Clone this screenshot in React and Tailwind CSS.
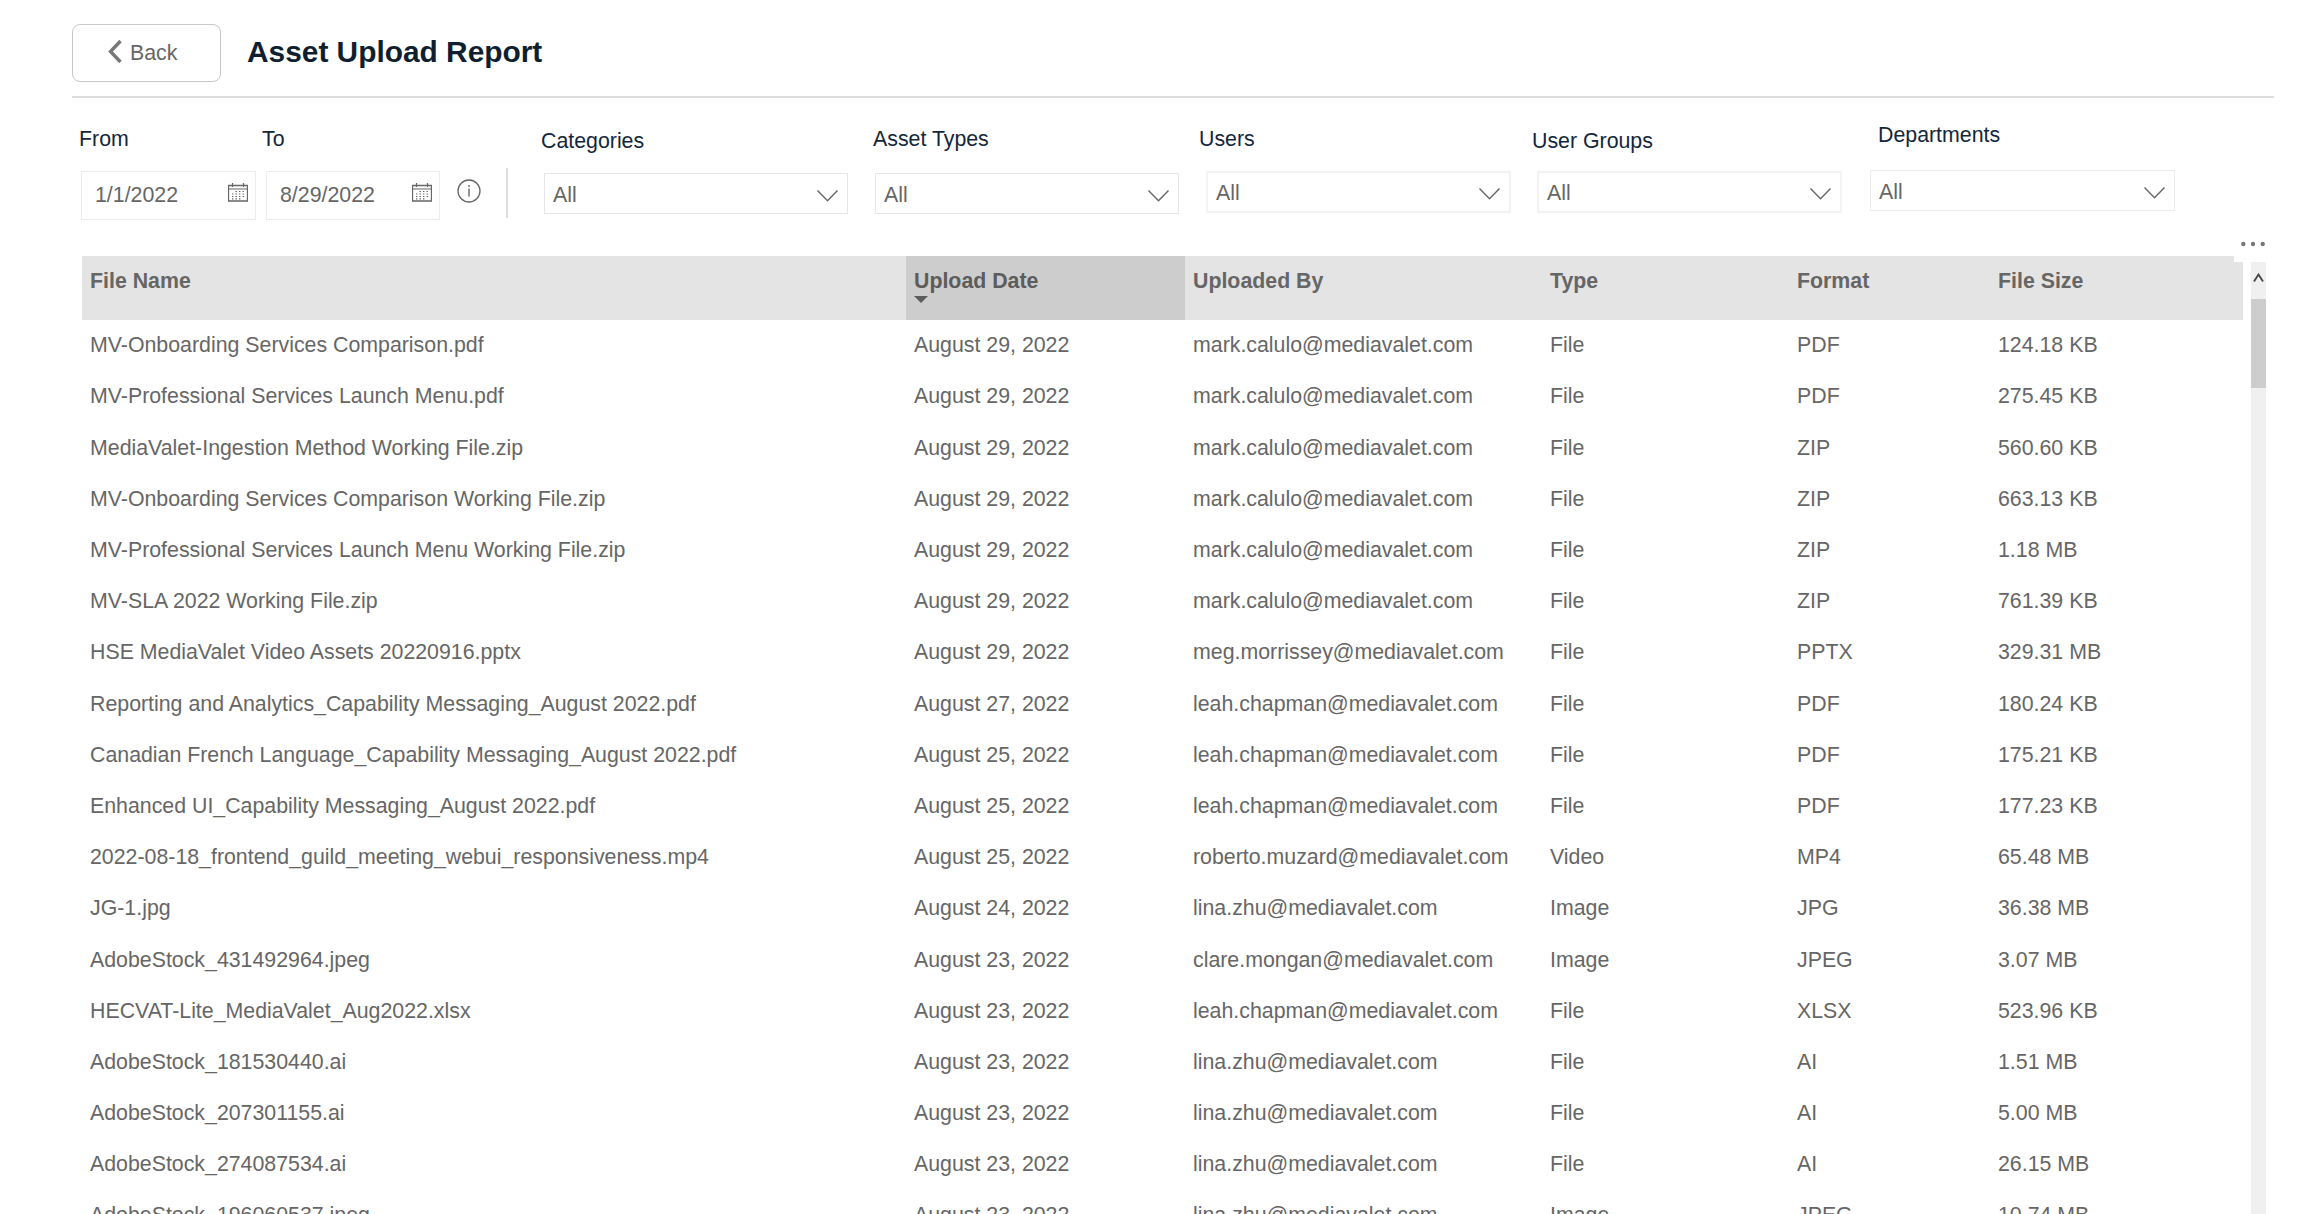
import React from 'react';

const columns = [
  { key: 'name', label: 'File Name', width: 'w-[824px]' },
  { key: 'date', label: 'Upload Date', width: 'w-[279px]', sorted: true },
  { key: 'by', label: 'Uploaded By', width: 'w-[357px]' },
  { key: 'type', label: 'Type', width: 'w-[247px]' },
  { key: 'format', label: 'Format', width: 'w-[201px]' },
  { key: 'size', label: 'File Size', width: 'w-[253px]' },
];

const rows = [
  ['MV-Onboarding Services Comparison.pdf', 'August 29, 2022', 'mark.calulo', 'File', 'PDF', '124.18 KB'],
  ['MV-Professional Services Launch Menu.pdf', 'August 29, 2022', 'mark.calulo', 'File', 'PDF', '275.45 KB'],
  ['MediaValet-Ingestion Method Working File.zip', 'August 29, 2022', 'mark.calulo', 'File', 'ZIP', '560.60 KB'],
  ['MV-Onboarding Services Comparison Working File.zip', 'August 29, 2022', 'mark.calulo', 'File', 'ZIP', '663.13 KB'],
  ['MV-Professional Services Launch Menu Working File.zip', 'August 29, 2022', 'mark.calulo', 'File', 'ZIP', '1.18 MB'],
  ['MV-SLA 2022 Working File.zip', 'August 29, 2022', 'mark.calulo', 'File', 'ZIP', '761.39 KB'],
  ['HSE MediaValet Video Assets 20220916.pptx', 'August 29, 2022', 'meg.morrissey', 'File', 'PPTX', '329.31 MB'],
  ['Reporting and Analytics_Capability Messaging_August 2022.pdf', 'August 27, 2022', 'leah.chapman', 'File', 'PDF', '180.24 KB'],
  ['Canadian French Language_Capability Messaging_August 2022.pdf', 'August 25, 2022', 'leah.chapman', 'File', 'PDF', '175.21 KB'],
  ['Enhanced UI_Capability Messaging_August 2022.pdf', 'August 25, 2022', 'leah.chapman', 'File', 'PDF', '177.23 KB'],
  ['2022-08-18_frontend_guild_meeting_webui_responsiveness.mp4', 'August 25, 2022', 'roberto.muzard', 'Video', 'MP4', '65.48 MB'],
  ['JG-1.jpg', 'August 24, 2022', 'lina.zhu', 'Image', 'JPG', '36.38 MB'],
  ['AdobeStock_431492964.jpeg', 'August 23, 2022', 'clare.mongan', 'Image', 'JPEG', '3.07 MB'],
  ['HECVAT-Lite_MediaValet_Aug2022.xlsx', 'August 23, 2022', 'leah.chapman', 'File', 'XLSX', '523.96 KB'],
  ['AdobeStock_181530440.ai', 'August 23, 2022', 'lina.zhu', 'File', 'AI', '1.51 MB'],
  ['AdobeStock_207301155.ai', 'August 23, 2022', 'lina.zhu', 'File', 'AI', '5.00 MB'],
  ['AdobeStock_274087534.ai', 'August 23, 2022', 'lina.zhu', 'File', 'AI', '26.15 MB'],
  ['AdobeStock_196060537.jpeg', 'August 23, 2022', 'lina.zhu', 'Image', 'JPEG', '10.74 MB'],
];

// Each slicer carries its own nudge, the report canvas is not on a strict grid
const slicers = [
  { label: 'Categories', wrap: 'ml-[36px] w-[304px] pt-[31px]', labelPos: '-ml-[3px]', box: 'mt-[20px] h-[41px] border border-[#e6e6e6]' },
  { label: 'Asset Types', wrap: 'ml-[27px] w-[304px] pt-[29px]', labelPos: '-ml-[2px]', box: 'mt-[22px] h-[41px] border border-[#e6e6e6]' },
  { label: 'Users', wrap: 'ml-[27px] w-[305px] pt-[29px]', labelPos: '-ml-[7px]', box: 'mt-[20px] h-[42px] border-2 border-[#f3f3f3]' },
  { label: 'User Groups', wrap: 'ml-[26px] w-[305px] pt-[31px]', labelPos: '-ml-[5px]', box: 'mt-[18px] h-[42px] border-2 border-[#f3f3f3]' },
  { label: 'Departments', wrap: 'ml-[28px] w-[305px] pt-[25px]', labelPos: 'ml-[8px]', box: 'mt-[23px] h-[41px] border border-[#ececec]' },
];

function CalendarIcon() {
  return (
    <svg width="20" height="19" viewBox="0 0 20 19" fill="none" stroke="#666" className="shrink-0">
      <path d="M0.5 2.5h19v15.5h-19z" strokeWidth="1.3" />
      <path d="M0.5 6h19 M4.5 0v4 M15.5 0v4" strokeWidth="1.2" />
      <path d="M7.5 8.5h9 M4 11h12.5 M4 13.5h12.5 M4 15.8h8.5" strokeWidth="1.2" strokeDasharray="1.4 2.1" />
    </svg>
  );
}

function DateField({ label, value, wrap, labelPos }) {
  return (
    <div className={`flex flex-col pt-[29px] ${wrap}`}>
      <span className={`leading-[24px] text-[#14263a] ${labelPos}`}>{label}</span>
      <div className="mt-[20px] h-[49px] border border-[#ececec] flex items-start justify-between pl-[13px] pr-[7px] pt-[11px]">
        <span className="leading-[24px]">{value}</span>
        <CalendarIcon />
      </div>
    </div>
  );
}

function Slicer({ label, wrap, labelPos, box }) {
  return (
    <div className={`flex flex-col ${wrap}`}>
      <span className={`leading-[24px] text-[#14263a] ${labelPos}`}>{label}</span>
      <div className={`flex items-center justify-between pl-[8px] pr-[9px] ${box}`}>
        <span className="leading-[24px] pt-[2px]">All</span>
        <svg width="21" height="12" viewBox="0 0 21 12" fill="none" stroke="#666" strokeWidth="1.4" className="mt-[4px]">
          <path d="M0.5 0.5L10.5 10.8L20.5 0.5" />
        </svg>
      </div>
    </div>
  );
}

export default function App() {
  return (
    <div className="w-[2314px] h-[1214px] overflow-hidden bg-white font-['Liberation_Sans',Arial,sans-serif] text-[21.33px] text-[#666] whitespace-nowrap">
      {/* Title bar */}
      <header className="ml-[72px] w-[2202px] h-[98px] border-b-2 border-[#dcdcdc] flex items-start pt-[24px]">
        <button className="w-[149px] h-[58px] rounded-[8px] border border-[#c8c8c8] flex items-start pl-[35px]">
          <svg width="14" height="23" viewBox="0 0 14 23" fill="none" stroke="#777" strokeWidth="3.4" className="mt-[15px]">
            <path d="M12.5 1L2.5 11.5L12.5 22" />
          </svg>
          <span className="ml-[8px] mt-[16px] leading-[24px]">Back</span>
        </button>
        <h1 className="ml-[26px] mt-[10px] text-[29.87px] leading-[36px] font-bold text-[#0f1f30]">Asset Upload Report</h1>
      </header>

      {/* Filters */}
      <section className="flex items-start h-[158px] pl-[81px]">
        <DateField label="From" value="1/1/2022" wrap="w-[175px]" labelPos="-ml-[2px]" />
        <DateField label="To" value="8/29/2022" wrap="ml-[10px] w-[174px]" labelPos="-ml-[4px]" />
        <svg width="24" height="24" viewBox="0 0 24 24" fill="none" stroke="#666" className="ml-[17px] mt-[81px]">
          <circle cx="12" cy="12" r="11" strokeWidth="1.3" />
          <path d="M12 9.5v8 M12 6v2" strokeWidth="1.4" />
        </svg>
        <div className="ml-[25px] mt-[70px] w-[2px] h-[50px] bg-[#dcdcdc]" />
        {slicers.map((s) => (
          <Slicer key={s.label} {...s} />
        ))}
      </section>

      {/* Report table */}
      <section className="flex items-start pl-[82px]">
        <div className="w-[2161px]">
          <div className="relative flex h-[64px] bg-[#e4e4e4] font-bold">
            {columns.map((c) => (
              <div key={c.key} className={`${c.width} shrink-0 pl-[8px] pt-[13px] ${c.sorted ? 'bg-[#cdcdcd] text-[#5c5c5c]' : ''}`}>
                <div className="leading-[24px]">{c.label}</div>
                {c.sorted && (
                  <svg width="14" height="7" viewBox="0 0 14 7" className="mt-[3px]">
                    <path d="M0 0h14L7 7z" fill="#5c5c5c" />
                  </svg>
                )}
              </div>
            ))}
            <div className="absolute right-0 top-0 w-[9px] h-[6px] bg-white" />
            <svg width="24" height="6" viewBox="0 0 24 6" fill="#777" className="absolute -right-[22px] -top-[15px]">
              <circle cx="2.3" cy="3" r="2.2" />
              <circle cx="12" cy="3" r="2.2" />
              <circle cx="21.7" cy="3" r="2.2" />
            </svg>
          </div>
          {rows.map((row) => (
            <div key={row[0]} className="flex h-[51.2px] pt-[13.3px]">
              {row.map((cell, i) => (
                <div key={columns[i].key} className={`${columns[i].width} shrink-0 pl-[8px] leading-[24px]`}>
                  {columns[i].key === 'by' ? `${cell}@mediavalet.com` : cell}
                </div>
              ))}
            </div>
          ))}
        </div>

        {/* Scrollbar */}
        <div className="ml-[8px] mt-[6px] w-[15px] h-[952px] bg-[#f0f0f0] flex flex-col items-center">
          <svg width="11" height="9" viewBox="0 0 11 9" fill="none" stroke="#444" strokeWidth="1.8" className="mt-[11px]">
            <path d="M1 8.5L5.5 1.5L10 8.5" />
          </svg>
          <div className="mt-[17px] w-full h-[89px] bg-[#cdcdcd]" />
        </div>
      </section>
    </div>
  );
}
